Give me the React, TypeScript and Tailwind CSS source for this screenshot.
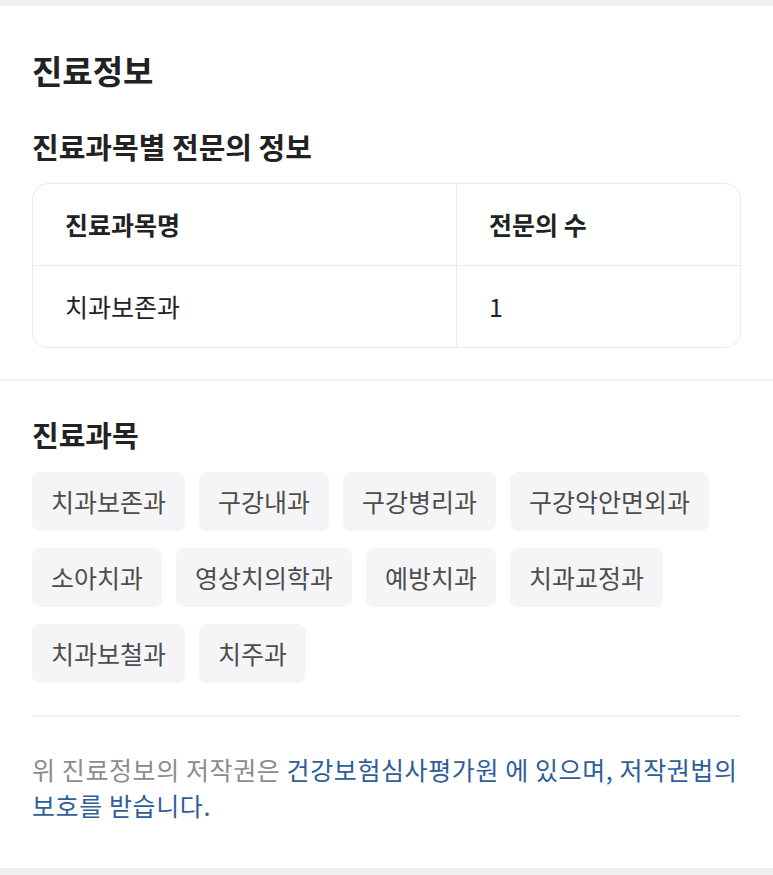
const FONT = { fontFamily: '"Noto Sans CJK KR", "Noto Sans", sans-serif' };

const departments = [
  "치과보존과",
  "구강내과",
  "구강병리과",
  "구강악안면외과",
  "소아치과",
  "영상치의학과",
  "예방치과",
  "치과교정과",
  "치과보철과",
  "치주과",
];

export default function App() {
  return (
    <div className="min-h-screen bg-white text-[#222]" style={FONT}>
      <div className="h-[6px] bg-[#efeff1]" />

      {/* 진료과목별 전문의 */}
      <section className="px-8 pt-[45px] pb-[31px]">
        <h1 className="text-[33px] font-bold leading-[38px]">진료정보</h1>
        <h2 className="mt-[40px] text-[29px] font-bold leading-[34px]">
          진료과목별 전문의 정보
        </h2>
        <div className="mt-[20px] overflow-hidden rounded-2xl border border-[#ebebeb]">
          <div className="grid grid-cols-[424px_1fr]">
            <div className="flex h-[82px] items-center border-r border-b border-[#ebebeb] pl-8 text-[25px] font-bold">
              진료과목명
            </div>
            <div className="flex h-[82px] items-center border-b border-[#ebebeb] pl-8 text-[25px] font-bold">
              전문의 수
            </div>
            <div className="flex h-[81px] items-center border-r border-[#ebebeb] pl-8 text-[25px]">
              치과보존과
            </div>
            <div className="flex h-[81px] items-center pl-8 text-[25px]">1</div>
          </div>
        </div>
      </section>

      <div className="h-[2px] bg-[#f0f0f0]" />

      {/* 진료과목 */}
      <section className="px-8 pt-[37px]">
        <h2 className="text-[29px] font-bold leading-[32px]">진료과목</h2>
        <ul className="mt-[22px] flex flex-wrap gap-x-[14px] gap-y-[17px]">
          {departments.map((d) => (
            <li
              key={d}
              className="flex h-[59px] items-center rounded-lg bg-[#f5f5f7] px-[19px] text-[25px] text-[#4d4d4d]"
            >
              {d}
            </li>
          ))}
        </ul>
        <div className="mt-8 h-[2px] bg-[#f0f0f0]" />
        <p className="break-keep pt-[34px] pb-[45px] text-[25px] leading-[36px] tracking-[0.6px] text-[#8c8c8c]">
          위 진료정보의 저작권은{" "}
          <span className="text-[#2f5e98]">
            건강보험심사평가원 에 있으며, 저작권법의 보호를 받습니다.
          </span>
        </p>
      </section>

      <div className="h-[8px] bg-[#efeff1]" />
    </div>
  );
}
